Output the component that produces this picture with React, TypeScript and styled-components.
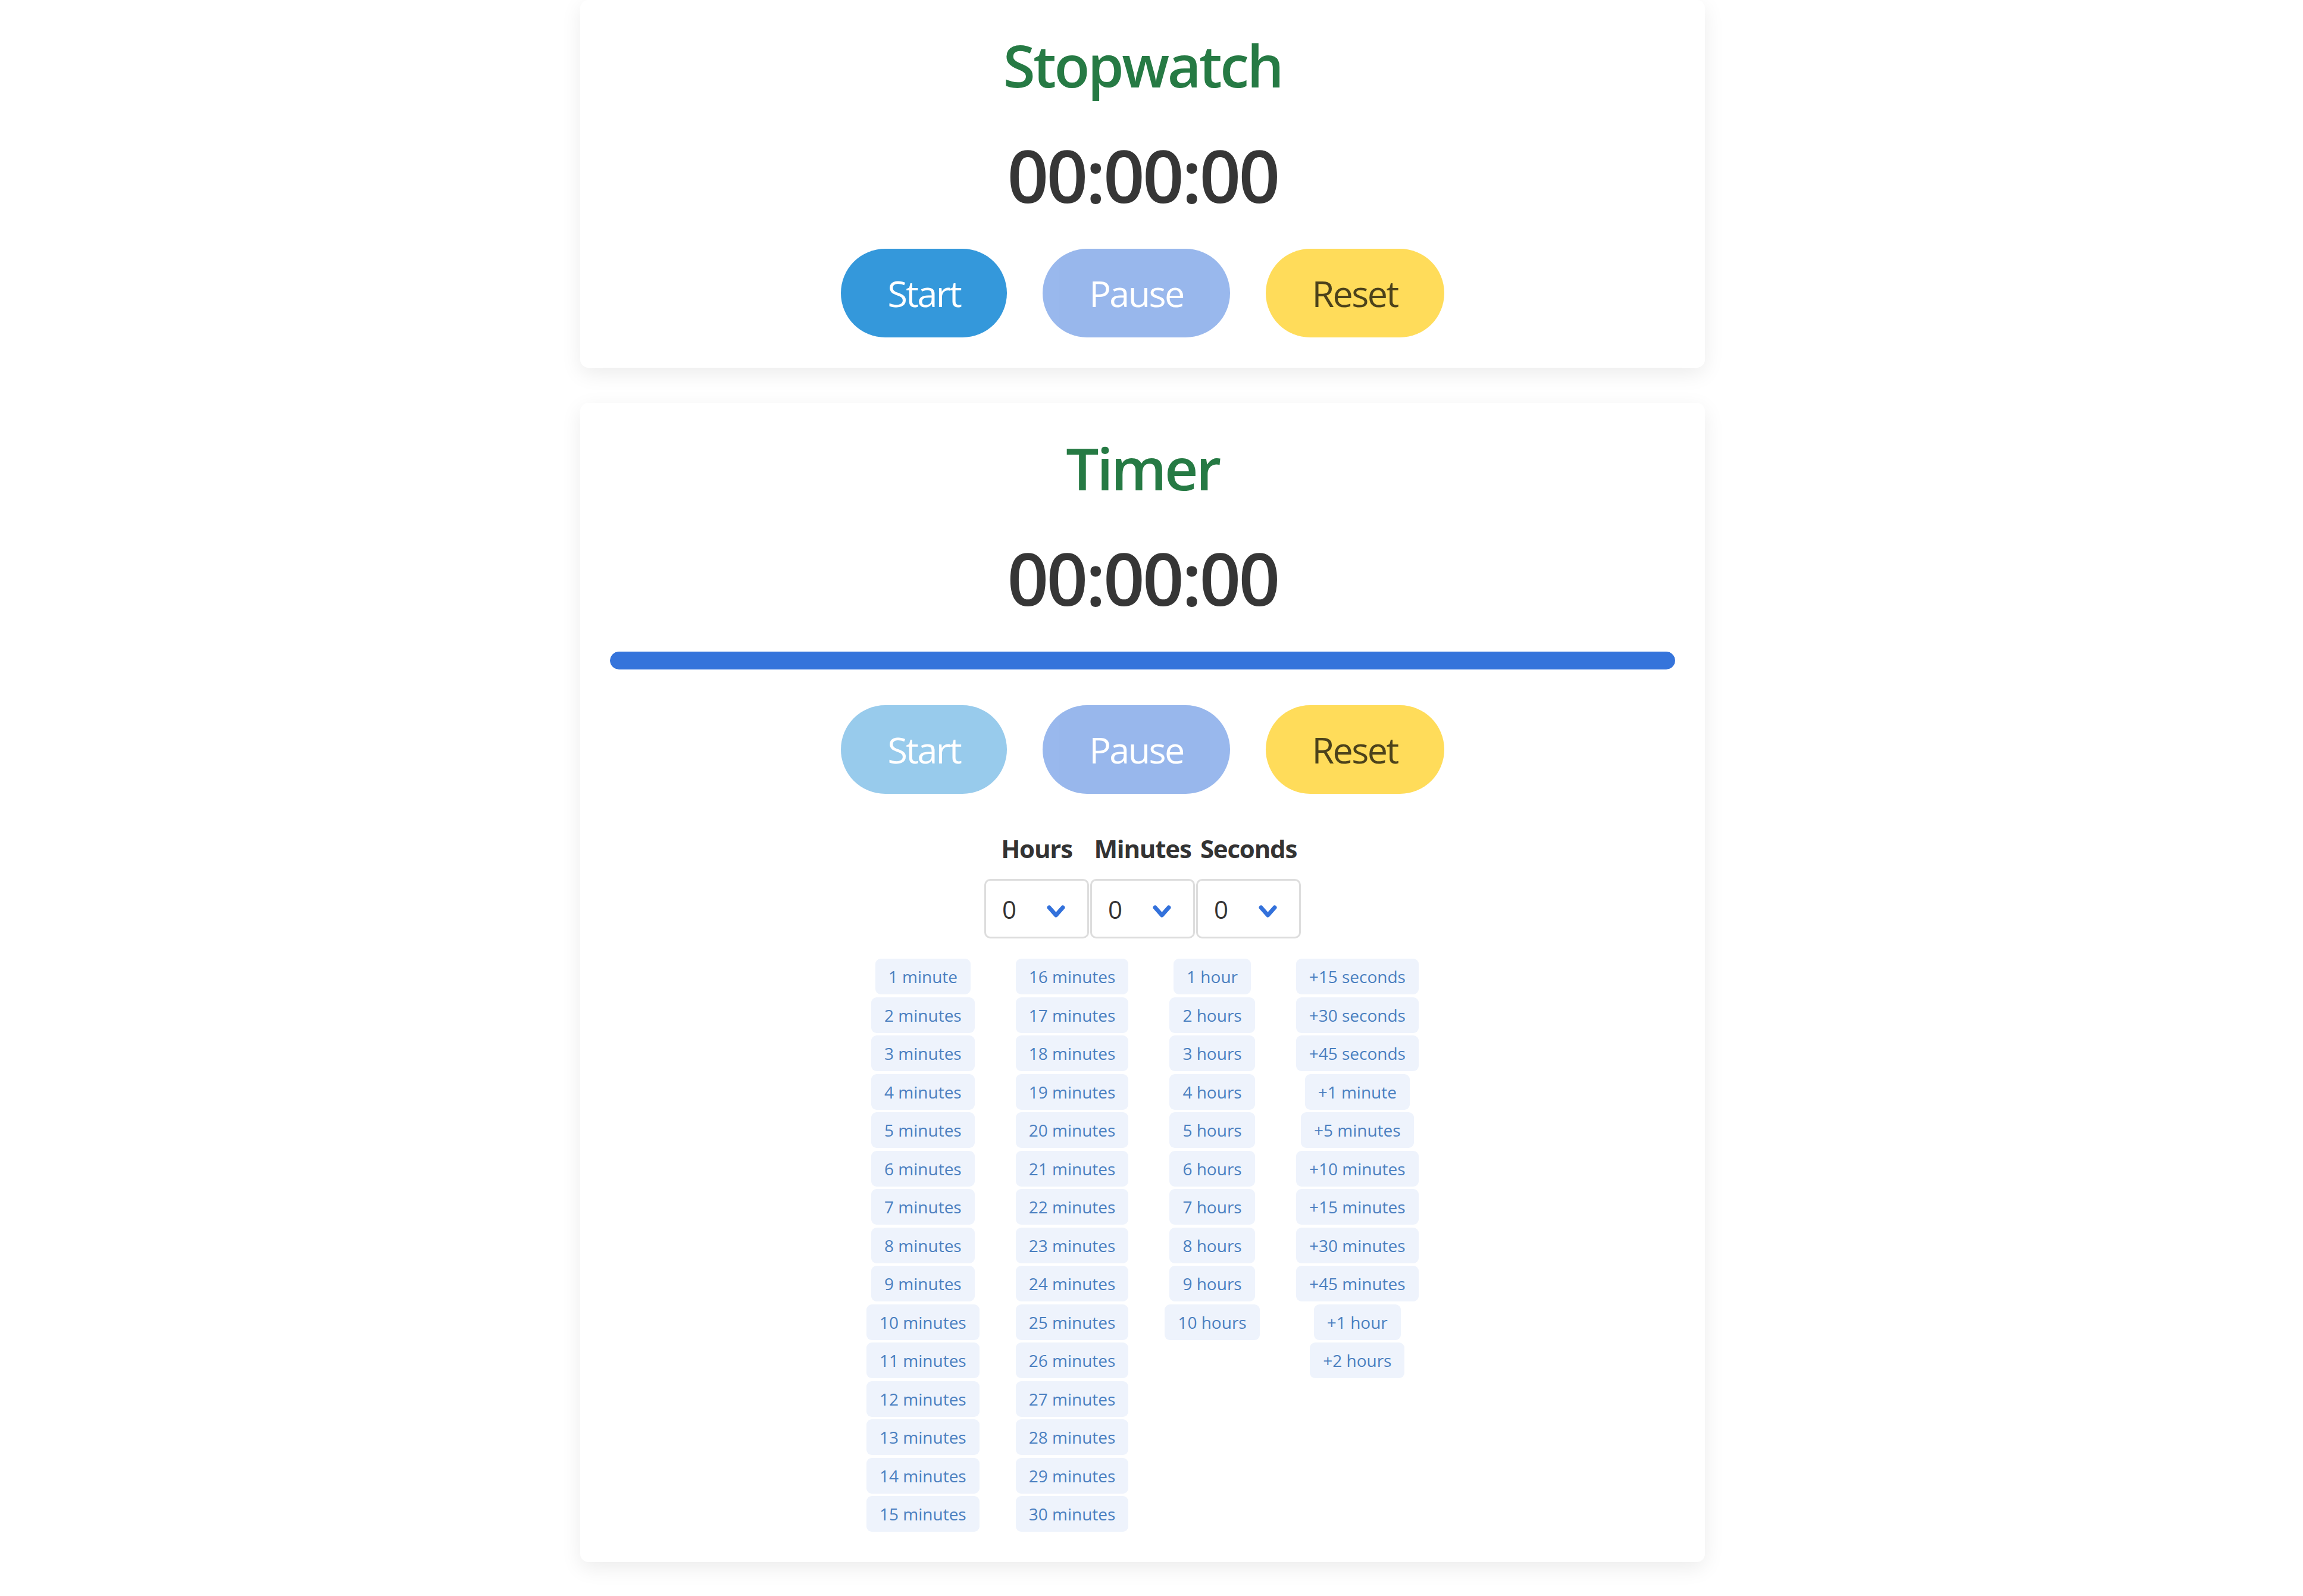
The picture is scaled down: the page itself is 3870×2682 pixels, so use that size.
import React from "react";
import styled, { createGlobalStyle } from "styled-components";

const GlobalStyle = createGlobalStyle`
  html, body {
    margin: 0;
    padding: 0;
    background: #ffffff;
  }
  body {
    font-family: "Open Sans", "Noto Sans", sans-serif;
    color: #333333;
  }
  * {
    box-sizing: border-box;
  }
`;

const Page = styled.div`
  display: flex;
  flex-direction: column;
  align-items: center;
  gap: 59px;
  padding: 0 30px 40px 0;
`;

const Card = styled.section`
  width: 1890px;
  background: #ffffff;
  border-radius: 14px;
  box-shadow: 0 10px 35px rgba(0, 0, 0, 0.08);
  display: flex;
  flex-direction: column;
  align-items: center;
  padding: 49px 50px 51px;
`;

const Title = styled.h1`
  margin: 0;
  font-size: 98px;
  line-height: 120px;
  font-weight: 600;
  letter-spacing: -3.5px;
  color: #267a44;
`;

const Clock = styled.div`
  margin-top: 50px;
  font-size: 122px;
  line-height: 150px;
  font-weight: 600;
  letter-spacing: -3.8px;
  color: #363636;
`;

const Track = styled.div`
  margin-top: 49px;
  width: 100%;
  height: 30px;
  border-radius: 15px;
  background: #e6ecf7;
  overflow: hidden;
`;

const Fill = styled.div`
  height: 100%;
  background: #3574db;
  border-radius: 15px;
`;

const Controls = styled.div<{ $top: number }>`
  margin-top: ${(p) => p.$top}px;
  display: flex;
  gap: 60px;
`;

const Btn = styled.button<{ $bg: string; $fg: string }>`
  height: 149px;
  padding: 0 78px;
  border: none;
  border-radius: 999px;
  background: ${(p) => p.$bg};
  color: ${(p) => p.$fg};
  font-family: inherit;
  font-size: 61px;
  letter-spacing: -2.6px;
  cursor: pointer;

  &:disabled {
    opacity: 0.5;
    cursor: default;
  }
`;

const Picker = styled.div`
  margin-top: 67px;
  display: grid;
  grid-template-columns: repeat(3, 176px);
  column-gap: 2px;
  row-gap: 26px;
  justify-items: center;
`;

const PickLabel = styled.div`
  font-size: 42px;
  line-height: 50px;
  font-weight: 700;
  letter-spacing: -1.2px;
  color: #333333;
`;

const SelectBox = styled.div`
  position: relative;
  width: 176px;
  height: 100px;
`;

const Select = styled.select`
  appearance: none;
  width: 100%;
  height: 100%;
  border: 3px solid #dddddd;
  border-radius: 10px;
  background: #ffffff;
  padding: 0 0 0 27px;
  font-family: inherit;
  font-size: 42px;
  color: #333333;
  outline: none;
`;

const Chevron = styled.svg`
  position: absolute;
  right: 40px;
  top: 44px;
  width: 31px;
  height: 21px;
  pointer-events: none;
`;

const Presets = styled.div`
  margin-top: 34px;
  display: flex;
  gap: 61px;
  align-items: flex-start;
`;

const PresetCol = styled.div`
  display: flex;
  flex-direction: column;
  align-items: center;
  gap: 4.5px;
`;

const Chip = styled.button`
  height: 60px;
  padding: 0 22px;
  border: none;
  border-radius: 9px;
  background: #eef3fc;
  color: #4a7fc0;
  font-family: inherit;
  font-size: 28px;
  cursor: pointer;
`;

const range = (a: number, b: number) =>
  Array.from({ length: b - a + 1 }, (_, i) => a + i);

const presetCols: string[][] = [
  range(1, 15).map((n) => (n === 1 ? "1 minute" : `${n} minutes`)),
  range(16, 30).map((n) => `${n} minutes`),
  range(1, 10).map((n) => (n === 1 ? "1 hour" : `${n} hours`)),
  [
    "+15 seconds",
    "+30 seconds",
    "+45 seconds",
    "+1 minute",
    "+5 minutes",
    "+10 minutes",
    "+15 minutes",
    "+30 minutes",
    "+45 minutes",
    "+1 hour",
    "+2 hours",
  ],
];

const units = [
  { label: "Hours", max: 23 },
  { label: "Minutes", max: 59 },
  { label: "Seconds", max: 59 },
];

function Dropdown({ max }: { max: number }) {
  return (
    <SelectBox>
      <Select defaultValue="0">
        {range(0, max).map((n) => (
          <option key={n} value={n}>
            {n}
          </option>
        ))}
      </Select>
      <Chevron viewBox="0 0 31 21">
        <polyline
          points="4,4 15.5,17 27,4"
          fill="none"
          stroke="#3371db"
          strokeWidth="7"
          strokeLinecap="round"
          strokeLinejoin="round"
        />
      </Chevron>
    </SelectBox>
  );
}

function ControlButtons({ top, startOff }: { top: number; startOff: boolean }) {
  return (
    <Controls $top={top}>
      <Btn $bg="#3498db" $fg="#ffffff" disabled={startOff}>
        Start
      </Btn>
      <Btn $bg="#3371db" $fg="#ffffff" disabled>
        Pause
      </Btn>
      <Btn $bg="#ffdc5a" $fg="rgba(0, 0, 0, 0.7)">
        Reset
      </Btn>
    </Controls>
  );
}

export default function App() {
  return (
    <>
      <GlobalStyle />
      <Page>
        <Card>
          <Title>Stopwatch</Title>
          <Clock>00:00:00</Clock>
          <ControlButtons top={49} startOff={false} />
        </Card>

        <Card>
          <Title>Timer</Title>
          <Clock>00:00:00</Clock>
          <Track>
            <Fill style={{ width: "100%" }} />
          </Track>
          <ControlButtons top={60} startOff />
          <Picker>
            {units.map((u) => (
              <PickLabel key={u.label}>{u.label}</PickLabel>
            ))}
            {units.map((u) => (
              <Dropdown key={u.label} max={u.max} />
            ))}
          </Picker>
          <Presets>
            {presetCols.map((col, i) => (
              <PresetCol key={i}>
                {col.map((t) => (
                  <Chip key={t}>{t}</Chip>
                ))}
              </PresetCol>
            ))}
          </Presets>
        </Card>
      </Page>
    </>
  );
}
